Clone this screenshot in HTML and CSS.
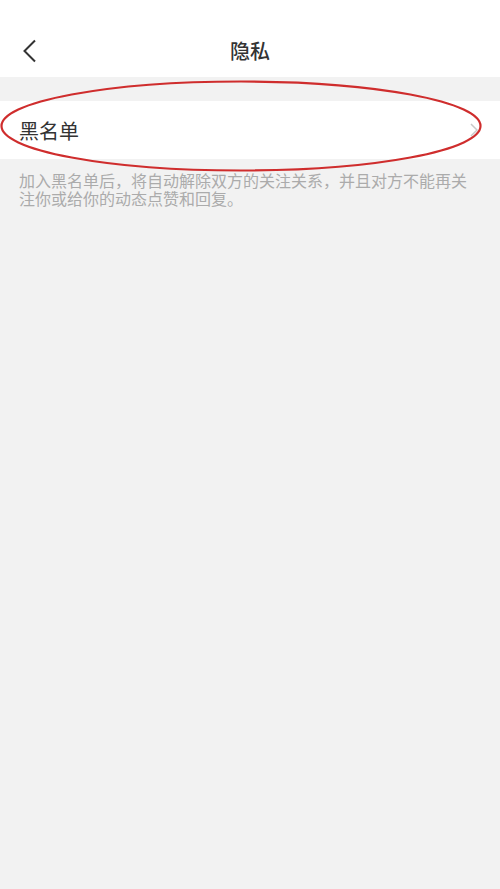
FILE: index.html
```html
<!DOCTYPE html>
<html lang="zh-CN">
<head>
<meta charset="utf-8">
<title>隐私</title>
<link rel="stylesheet" href="styles.css">
</head>
<body>
<div class="page">
  <header class="nav">
    <span class="back">
      <svg width="16" height="24" viewBox="0 0 16 24"><path d="M13 1.5 L2.5 12 L13 22.5" fill="none" stroke="#333" stroke-width="2"/></svg>
    </span>
    <h1 class="title">隐私</h1>
  </header>
  <div class="gap"></div>
  <div class="row">
    <span class="row-label">黑名单</span>
    <span class="arrow">
      <svg width="8" height="14" viewBox="0 0 8 14"><path d="M1 1 L7 7 L1 13" fill="none" stroke="#c8c8c8" stroke-width="1.5"/></svg>
    </span>
    <svg class="mark" width="484" height="96" viewBox="0 0 484 96"><ellipse cx="241" cy="47" rx="239.5" ry="44.5" fill="none" stroke="#cf2d2d" stroke-width="2.2"/></svg>
  </div>
  <p class="note">加入黑名单后，将自动解除双方的关注关系，并且对方不能再关注你或给你的动态点赞和回复。</p>
</div>
</body>
</html>
```

FILE: styles.css
```css
html, body {
  margin: 0;
  padding: 0;
}
body {
  background: #f2f2f2;
  font-family: "Noto Sans CJK SC", "Noto Sans", sans-serif;
}
.page {
  width: 500px;
  min-height: 889px;
  background: #f2f2f2;
}
.nav {
  height: 77px;
  background: #fff;
  display: flex;
  align-items: center;
  justify-content: center;
  position: relative;
  padding-top: 2px;
  box-sizing: border-box;
}
.back {
  position: absolute;
  left: 22px;
  top: 39px;
  width: 16px;
  height: 24px;
}
.back svg { display: block; }
.title {
  margin: 0;
  margin-top: 22px;
  font-size: 20px;
  font-weight: 500;
  color: #333;
  line-height: 24px;
}
.gap {
  height: 24px;
}
.row {
  height: 58px;
  background: #fff;
  display: flex;
  align-items: center;
  justify-content: space-between;
  padding: 0 22px 0 19px;
  position: relative;
}
.row-label {
  font-size: 20px;
  color: #333;
  line-height: 24px;
  padding-top: 2px;
}
.arrow svg { display: block; }
.mark {
  position: absolute;
  left: 0;
  top: -22px;
  pointer-events: none;
}
.note {
  margin: 0;
  padding: 12px 20px 0 19px;
  font-size: 16px;
  line-height: 18px;
  color: #ababab;
}
```
